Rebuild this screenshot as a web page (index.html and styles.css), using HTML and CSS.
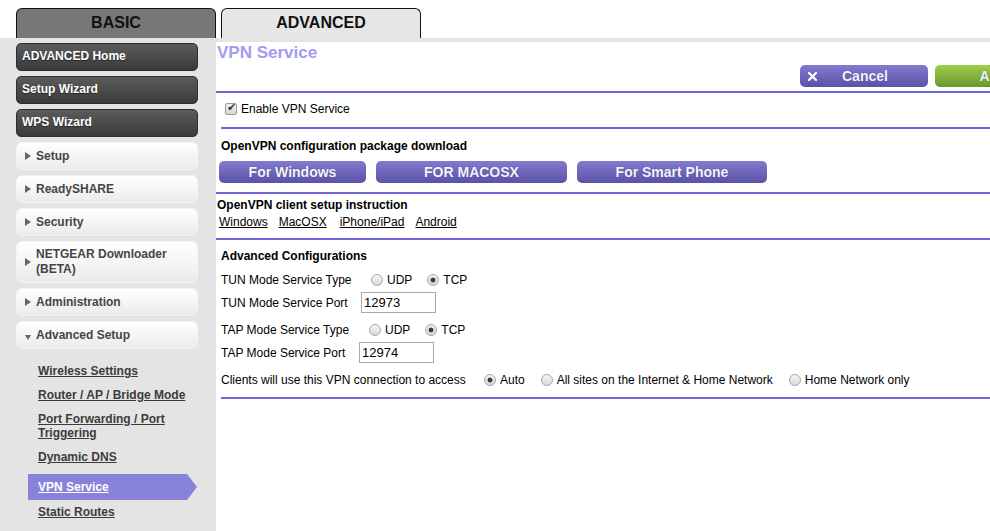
FILE: index.html
```html
<!DOCTYPE html>
<html lang="en">
<head>
    <meta charset="UTF-8">
    <title>VPN Service</title>
    <link rel="stylesheet" href="styles.css">
</head>
<body>

<div class="tabs">
    <div class="tab tab-basic">BASIC</div>
    <div class="tab tab-advanced">ADVANCED</div>
</div>

<div class="layout">
    <nav class="sidebar">
        <a class="nav-dark">ADVANCED Home</a>
        <a class="nav-dark">Setup Wizard</a>
        <a class="nav-dark">WPS Wizard</a>
        <a class="nav-light"><span class="caret"></span>Setup</a>
        <a class="nav-light"><span class="caret"></span>ReadySHARE</a>
        <a class="nav-light"><span class="caret"></span>Security</a>
        <a class="nav-light nav-tall"><span class="caret"></span><span>NETGEAR Downloader<br>(BETA)</span></a>
        <a class="nav-light"><span class="caret"></span>Administration</a>
        <a class="nav-light"><span class="caret caret-open"></span>Advanced Setup</a>

        <div class="sub-menu">
            <a class="sub-link">Wireless Settings</a>
            <a class="sub-link">Router / AP / Bridge Mode</a>
            <a class="sub-link">Port Forwarding / Port Triggering</a>
            <a class="sub-link">Dynamic DNS</a>
            <a class="sub-link active">VPN Service</a>
            <a class="sub-link">Static Routes</a>
        </div>
    </nav>

    <main class="content">
        <div class="head-block">
            <h1 class="page-title">VPN Service</h1>
            <div class="actions">
                <button class="btn btn-cancel">
                    <svg class="btn-icon" width="9" height="9" viewBox="0 0 9 9">
                        <path d="M1 1 L8 8 M8 1 L1 8" stroke="#fff" stroke-width="2.2" stroke-linecap="square"/>
                    </svg>
                    <span>Cancel</span>
                </button>
                <button class="btn btn-apply">Apply</button>
            </div>
        </div>

        <div class="enable-block">
            <input type="checkbox" class="check" checked>
            <span>Enable VPN Service</span>
        </div>

        <div class="download-block">
            <div class="block-title">OpenVPN configuration package download</div>
            <div class="download-buttons">
                <button class="btn btn-windows">For Windows</button>
                <button class="btn btn-mac">FOR MACOSX</button>
                <button class="btn btn-phone">For Smart Phone</button>
            </div>
        </div>

        <div class="instruction-block">
            <div class="block-title">OpenVPN client setup instruction</div>
            <div class="guide-links">
                <a>Windows</a>
                <a>MacOSX</a>
                <a class="guide-iphone">iPhone/iPad</a>
                <a>Android</a>
            </div>
        </div>

        <div class="advanced-block">
            <div class="block-title">Advanced Configurations</div>

            <div class="cfg-row cfg-type">
                <span class="cfg-label">TUN Mode Service Type</span>
                <div class="choices">
                    <label class="choice"><input type="radio" name="tun"><span>UDP</span></label>
                    <label class="choice"><input type="radio" name="tun" checked><span>TCP</span></label>
                </div>
            </div>
            <div class="cfg-row">
                <span class="cfg-label">TUN Mode Service Port</span>
                <input type="text" class="port" value="12973">
            </div>

            <div class="cfg-row cfg-type">
                <span class="cfg-label cfg-tap">TAP Mode Service Type</span>
                <div class="choices">
                    <label class="choice"><input type="radio" name="tap"><span>UDP</span></label>
                    <label class="choice"><input type="radio" name="tap" checked><span>TCP</span></label>
                </div>
            </div>
            <div class="cfg-row">
                <span class="cfg-label cfg-tap">TAP Mode Service Port</span>
                <input type="text" class="port" value="12974">
            </div>

            <div class="cfg-row cfg-type">
                <span class="cfg-label cfg-clients">Clients will use this VPN connection to access</span>
                <label class="choice choice-wide"><input type="radio" name="access" checked><span>Auto</span></label>
                <label class="choice choice-wide"><input type="radio" name="access"><span>All sites on the Internet &amp; Home Network</span></label>
                <label class="choice choice-wide"><input type="radio" name="access"><span>Home Network only</span></label>
            </div>
        </div>
    </main>
</div>

</body>
</html>
```

FILE: styles.css
```css
body {
    margin: 0;
    font-family: "Liberation Sans", Arial, sans-serif;
    font-size: 12px;
    color: #000;
    background-color: #fff;
    overflow: hidden;
}

/* top tabs */
.tabs {
    display: flex;
    gap: 5px;
    padding: 8px 0 0 16px;
}

.tab {
    width: 198px;
    height: 29px;
    border: 1px solid #111;
    border-bottom: none;
    border-radius: 6px 6px 0 0;
    text-align: center;
    font-size: 16px;
    font-weight: bold;
    line-height: 27px;
    color: #111;
}

.tab-basic {
    background-color: #777;
}

.tab-advanced {
    background-color: #e6e6e6;
}

.layout {
    display: flex;
    background-color: #e4e4e4;
    padding-top: 4px;
    height: calc(100vh - 42px);
}

/* left menu */
.sidebar {
    width: 216px;
    flex-shrink: 0;
    box-sizing: border-box;
    padding: 1px 0 0 16px;
}

.nav-dark {
    display: block;
    width: 182px;
    height: 28px;
    box-sizing: border-box;
    margin-bottom: 5px;
    padding-left: 5px;
    border: 1px solid #2e2e2e;
    border-radius: 5px;
    background: linear-gradient(#5c5c5c, #3a3a3a);
    color: #fff;
    font-weight: bold;
    line-height: 25px;
    text-shadow: 0 1px 1px rgba(0, 0, 0, 0.5);
}

.nav-light {
    display: flex;
    align-items: center;
    width: 182px;
    height: 28px;
    box-sizing: border-box;
    margin-bottom: 5px;
    padding: 0 0 1px 8px;
    border: 1px solid #f3f3f3;
    border-radius: 6px;
    background: linear-gradient(#ffffff, #ebebeb);
    color: #454545;
    font-weight: bold;
}

.nav-tall {
    height: 42px;
    line-height: 15px;
}

.caret {
    width: 0;
    height: 0;
    margin-right: 5px;
    border-top: 4px solid transparent;
    border-bottom: 4px solid transparent;
    border-left: 6px solid #666;
}

.caret-open {
    margin-top: 5px;
    margin-right: 5px;
    border-left: 3px solid transparent;
    border-right: 3px solid transparent;
    border-top: 5px solid #666;
    border-bottom: none;
}

.sub-menu {
    margin: 10px 0 0 12px;
}

.sub-link {
    display: block;
    width: 160px;
    padding: 5px 0 5px 10px;
    line-height: 14px;
    color: #3c3c3c;
    font-weight: bold;
    text-decoration: underline;
}

.sub-link.active {
    margin-top: 5px;
    width: 169px;
    height: 26px;
    box-sizing: border-box;
    padding: 0 0 0 10px;
    line-height: 26px;
    background-color: #8882d8;
    color: #fff;
    clip-path: polygon(0 0, calc(100% - 10px) 0, 100% 50%, calc(100% - 10px) 100%, 0 100%);
}

/* main area */
.content {
    flex: 1;
    min-width: 0;
    background-color: #fff;
    overflow: hidden;
}

.head-block {
    padding-bottom: 4px;
    border-bottom: 2px solid #6e67d9;
}

.page-title {
    margin: 0;
    padding: 1px 0 0 1px;
    font-size: 17px;
    line-height: 20px;
    color: #a19bf2;
}

.actions {
    display: flex;
    justify-content: flex-end;
    gap: 7px;
    margin: 2px -73px 0 0;
}

.btn {
    height: 22px;
    border: none;
    border-radius: 5px;
    padding: 0;
    font-family: "Liberation Sans", Arial, sans-serif;
    font-size: 14px;
    font-weight: bold;
    color: #f4f4ff;
    background: linear-gradient(#827bd0, #5a52a5);
    text-shadow: 0 0 1px rgba(40, 30, 90, 0.6);
    flex-shrink: 0;
}

.btn-cancel {
    display: flex;
    align-items: center;
    width: 128px;
    padding-left: 8px;
}

.btn-icon {
    margin-right: 25px;
}

.btn-apply {
    width: 128px;
    background: linear-gradient(#9fcd4b, #6b982f);
}

.enable-block {
    display: flex;
    align-items: center;
    margin-left: 5px;
    padding: 6px 0 8px 4px;
    line-height: 20px;
    border-bottom: 2px solid #6e67d9;
}

.check {
    appearance: none;
    width: 12px;
    height: 12px;
    margin: 0 4px 0 0;
    border: 1px solid #9a9a9a;
    border-radius: 2px;
    background: linear-gradient(#f2f2f2, #d6d6d6);
    position: relative;
}

.check:checked::before {
    content: "\2714";
    position: absolute;
    left: 1px;
    top: -3px;
    font-size: 11px;
    color: #333;
    font-family: "DejaVu Sans", sans-serif;
}

.block-title {
    font-weight: bold;
    line-height: 16px;
}

.download-block {
    padding: 9px 0;
    border-bottom: 2px solid #6e67d9;
}

.download-block .block-title {
    padding-left: 5px;
}

.download-buttons {
    display: flex;
    gap: 10px;
    margin-top: 7px;
    padding-left: 3px;
}

.btn-windows {
    width: 147px;
}

.btn-mac {
    width: 191px;
}

.btn-phone {
    width: 190px;
}

.instruction-block {
    padding: 3px 0 8px 1px;
    border-bottom: 2px solid #6e67d9;
}

.guide-links {
    display: flex;
    gap: 11px;
    margin-top: 1px;
    padding-left: 2px;
    line-height: 16px;
}

.guide-links a {
    color: #000;
    text-decoration: underline;
}

.guide-links .guide-iphone {
    margin-left: 2px;
}

.advanced-block {
    margin-left: 5px;
    padding: 8px 0 6px 0;
    border-bottom: 2px solid #6e67d9;
}

.cfg-row {
    display: flex;
    align-items: center;
    height: 23px;
}

.cfg-type {
    margin-top: 4px;
}

.cfg-label {
    width: 140px;
    flex-shrink: 0;
}

.cfg-label.cfg-tap {
    width: 138px;
}

.cfg-label.cfg-clients {
    width: 263px;
}

.choices {
    display: flex;
    padding-left: 10px;
}

.choice {
    display: inline-flex;
    align-items: center;
    margin-right: 15px;
}

.choice-wide {
    margin-right: 16px;
}

.choice input {
    appearance: none;
    width: 12px;
    height: 12px;
    margin: 0 4px 0 0;
    border: 1px solid #a8a8a8;
    border-radius: 50%;
    background: linear-gradient(#f6f6f6, #d8d8d8);
}

.choice input:checked {
    background: radial-gradient(circle, #3a3a3a 0, #3a3a3a 2px, transparent 2.8px), linear-gradient(#f2f2f2, #d4d4d4);
}

.port {
    width: 75px;
    height: 21px;
    box-sizing: border-box;
    margin: 0;
    padding: 0 2px;
    border: 1px solid #a9a9a9;
    font-family: "Liberation Sans", Arial, sans-serif;
    font-size: 13px;
    color: #000;
}
```
